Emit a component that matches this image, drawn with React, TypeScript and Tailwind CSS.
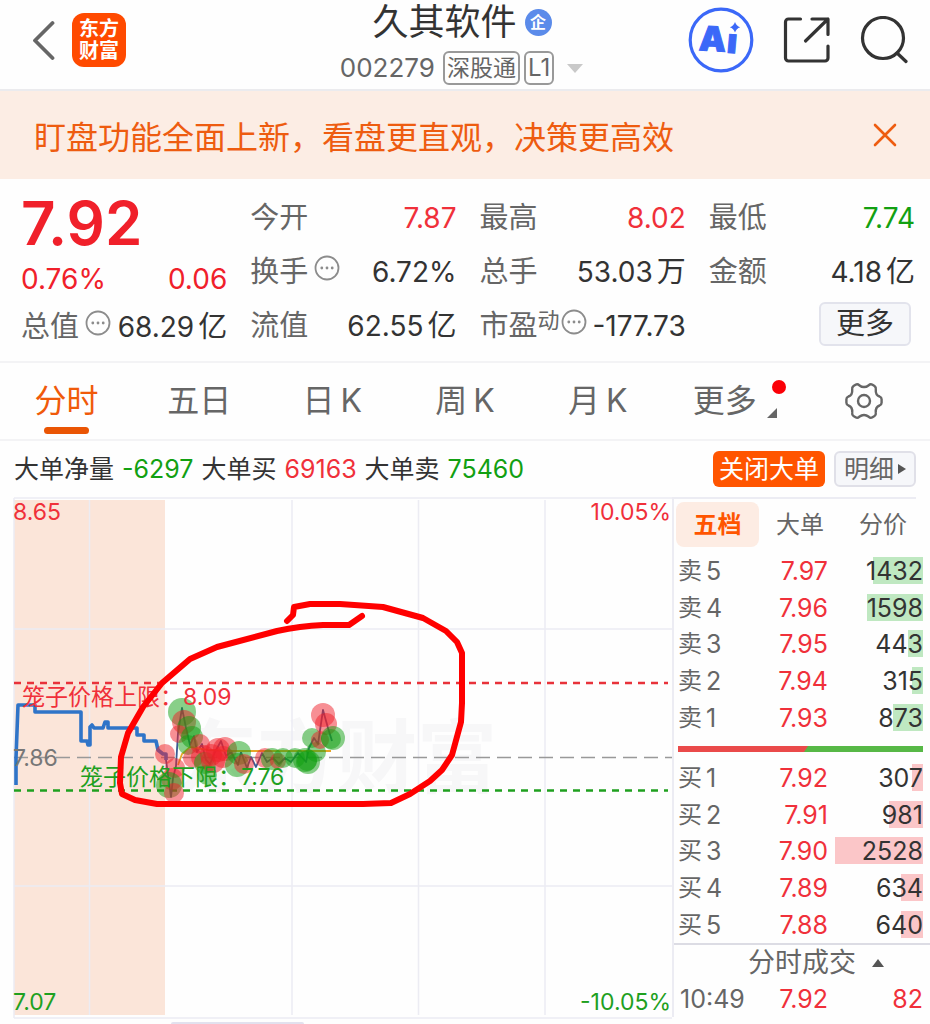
import React from "react";

type Level = { name: string; price: string; volume: number };

const asks: Level[] = [
  { name: "卖5", price: "7.97", volume: 1432 },
  { name: "卖4", price: "7.96", volume: 1598 },
  { name: "卖3", price: "7.95", volume: 443 },
  { name: "卖2", price: "7.94", volume: 315 },
  { name: "卖1", price: "7.93", volume: 873 },
];

const bids: Level[] = [
  { name: "买1", price: "7.92", volume: 307 },
  { name: "买2", price: "7.91", volume: 981 },
  { name: "买3", price: "7.90", volume: 2528 },
  { name: "买4", price: "7.89", volume: 634 },
  { name: "买5", price: "7.88", volume: 640 },
];

const MAX_VOLUME = 2528;
const RED = "#f0202a";
const GREEN = "#12a012";

// [x, y, radius, colour] of every large-order bubble
const bubbles: [number, number, number, string][] = [
  [165, 754, 10, RED],
  [175, 768, 10, RED],
  [172, 779, 11, RED],
  [169, 785, 13, GREEN],
  [174, 793, 10, RED],
  [182, 712, 14, GREEN],
  [184, 722, 12, RED],
  [189, 728, 12, GREEN],
  [179, 734, 9, RED],
  [192, 737, 11, GREEN],
  [188, 745, 10, GREEN],
  [200, 744, 10, RED],
  [193, 758, 10, RED],
  [203, 757, 12, RED],
  [205, 763, 11, GREEN],
  [207, 775, 10, GREEN],
  [213, 761, 12, RED],
  [218, 750, 12, RED],
  [225, 749, 12, RED],
  [211, 755, 11, RED],
  [223, 757, 11, RED],
  [239, 753, 12, GREEN],
  [237, 765, 12, GREEN],
  [244, 764, 10, RED],
  [265, 758, 10, RED],
  [272, 759, 11, GREEN],
  [278, 761, 8, RED],
  [283, 758, 10, GREEN],
  [295, 758, 10, GREEN],
  [305, 760, 12, GREEN],
  [308, 762, 12, GREEN],
  [307, 761, 10, GREEN],
  [316, 752, 10, GREEN],
  [312, 738, 10, GREEN],
  [320, 740, 9, RED],
  [323, 715, 12, RED],
  [326, 724, 11, RED],
  [333, 738, 12, GREEN],
  [331, 739, 10, GREEN],
];

function Dots() {
  return (
    <svg className="size-[26px] shrink-0 text-[#8c8c8c]" viewBox="0 0 26 26" fill="none" aria-hidden="true">
      <circle cx="13" cy="13" r="11.5" stroke="currentColor" strokeWidth="1.8" />
      <g fill="currentColor">
        <circle cx="7.8" cy="13" r="1.4" />
        <circle cx="13" cy="13" r="1.4" />
        <circle cx="18.2" cy="13" r="1.4" />
      </g>
    </svg>
  );
}

function Stat({
  label,
  value,
  unit,
  color = "text-[#333]",
  children,
}: {
  label: string;
  value: string;
  unit?: string;
  color?: string;
  children?: React.ReactNode;
}) {
  return (
    <div className="flex h-[54px] items-center justify-between whitespace-nowrap">
      <dt className="flex items-center text-[29px] leading-8 text-[#666]">
        {label}
        {children}
      </dt>
      <dd className={`flex items-center gap-1 text-[28px] leading-8 ${color}`}>
        {value}
        {unit && <span className="text-[29px]">{unit}</span>}
      </dd>
    </div>
  );
}

function Header() {
  return (
    <header className="grid h-[91px] grid-cols-[1fr_auto_1fr] items-start border-b-2 border-[#ebebee] pr-[22px] pl-4">
      <div className="flex items-center gap-4 pt-[13px] pl-4">
        <button aria-label="返回" className="text-[#666]">
          <svg className="h-10 w-6" viewBox="0 0 24 40" fill="none" stroke="currentColor" strokeWidth="3.8" strokeLinecap="round" strokeLinejoin="round">
            <path d="M20.5 3 3 20.5 20.5 38" />
          </svg>
        </button>
        <a href="#home" className="flex size-[54px] flex-col items-center justify-center rounded-xl bg-[#ff4a00] text-xl leading-[22px] font-bold text-white">
          <span>东方</span>
          <span>财富</span>
        </a>
      </div>
      <div className="flex flex-col items-center">
        <h1 className="flex h-11 items-center gap-2 text-4xl leading-[44px] text-[#333]">
          久其软件
          <span className="flex size-[27px] items-center justify-center rounded-full bg-[#5b8bea] text-base leading-4 font-bold text-white">企</span>
        </h1>
        <div className="flex h-12 items-center gap-1 text-[#666]">
          <span className="pr-1 text-[26px] leading-8">002279</span>
          <span className="rounded-md border-2 border-[#999] px-[2px] text-[23px] leading-[30px]">深股通</span>
          <span className="rounded-md border-2 border-[#999] px-[2px] text-2xl leading-[30px]">L1</span>
          <button aria-label="切换股票" className="pl-2">
            <svg className="h-[9px] w-[18px]" viewBox="0 0 18 9" aria-hidden="true">
              <path d="M1 0h16L9 9z" fill="#c9c9c9" />
            </svg>
          </button>
        </div>
      </div>
      <div className="flex items-center justify-end gap-[29px] pt-[7px] text-[#333]">
        <button aria-label="Ai">
          <svg className="size-[66px]" viewBox="0 0 66 66" fill="none">
            <circle cx="33" cy="33" r="30.800" stroke="#3b68f8" strokeWidth="3.200" />
            <g fill="#3b68f8" className="font-['Inter',sans-serif] text-[34px] font-black">
              <text x="11" y="44" transform="rotate(3 24 33)" stroke="#3b68f8" strokeWidth="1">A</text>
              <text x="39" y="46" transform="rotate(5 44 36)" stroke="#3b68f8" strokeWidth="1">ı</text>
              <path d="M47 15q1.300 4 5.200 5.300-3.900 1.300-5.200 5.300-1.300-4-5.200-5.300 3.900-1.300 5.200-5.300z" />
            </g>
          </svg>
        </button>
        <button aria-label="分享">
          <svg className="size-[48px]" viewBox="0 0 48 48" fill="none" stroke="currentColor" strokeWidth="3.200" strokeLinecap="round" strokeLinejoin="round">
            <path d="M17.500 3H5.500a3 3 0 0 0-3 3v36a3 3 0 0 0 3 3h36.500a3 3 0 0 0 3-3V30" />
            <path d="M29 3h16v15.500M45 3 22.500 25" />
          </svg>
        </button>
        <button aria-label="搜索">
          <svg className="size-[48px]" viewBox="0 0 48 48" fill="none" stroke="currentColor" strokeWidth="3.200" strokeLinecap="round">
            <circle cx="23" cy="22" r="20.500" />
            <path d="M37 37l9 8.500" />
          </svg>
        </button>
      </div>
    </header>
  );
}

function Quote() {
  return (
    <dl className="grid grid-cols-4 gap-x-[23px] border-b-2 border-[#f3f3f5] pt-3 pr-[15px] pb-2 pl-[21px]">
      <div className="text-[#f0202a]">
        <div className="flex h-16 items-center text-[60px] leading-[60px] font-semibold">7.92</div>
        <div className="flex h-12 items-center justify-between text-[28px] leading-8">
          <span>0.76%</span>
          <span>0.06</span>
        </div>
        <div className="flex h-[48px] items-center justify-between whitespace-nowrap text-[#333]">
          <dt className="flex items-center text-[29px] leading-8 text-[#666]">
            总值
            <span className="pb-2 pl-[6px]"><Dots /></span>
          </dt>
          <dd className="flex items-center gap-1 text-[28px] leading-8">
            68.29<span className="text-[29px]">亿</span>
          </dd>
        </div>
      </div>
      <div>
        <Stat label="今开" value="7.87" color="text-[#f0303a]" />
        <Stat label="换手" value="6.72%">
          <span className="pb-2 pl-[6px]"><Dots /></span>
        </Stat>
        <Stat label="流值" value="62.55" unit="亿" />
      </div>
      <div>
        <Stat label="最高" value="8.02" color="text-[#f0303a]" />
        <Stat label="总手" value="53.03" unit="万" />
        <Stat label="市盈" value="-177.73">
          <span className="flex items-center gap-px pb-2">
            <span className="pb-1 text-[22px] leading-6">动</span>
            <Dots />
          </span>
        </Stat>
      </div>
      <div>
        <Stat label="最低" value="7.74" color="text-[#12a012]" />
        <Stat label="金额" value="4.18" unit="亿" />
        <div className="flex h-[50px] items-center justify-end pr-1">
          <button className="h-11 w-[92px] rounded-md border-2 border-[#e2e3ec] bg-[#f6f7fa] text-[29px] leading-9 text-[#333]">更多</button>
        </div>
      </div>
    </dl>
  );
}

function Tabs() {
  return (
    <nav className="grid h-[78px] grid-cols-7 border-b-2 border-[#f3f3f5] text-[32px] leading-10 text-[#666]">
      <button className="flex flex-col items-center pt-[18px] text-[#f05a0a]">
        分时
        <span className="mt-[6px] h-[7px] w-[45px] rounded-full bg-[#ea5504]" />
      </button>
      <button className="flex justify-center pt-[18px]">五日</button>
      {["日", "周", "月"].map((unit) => (
        <button key={unit} className="flex justify-center gap-[6px] pt-[18px]">
          <span>{unit}</span>
          <span>K</span>
        </button>
      ))}
      <button className="relative flex justify-center gap-[10px] pt-[18px] pl-2">
        更多
        <svg className="mt-[27px] size-[10px]" viewBox="0 0 10 10" aria-hidden="true">
          <path d="M10 0v10H0z" fill="#666" />
        </svg>
        <span className="absolute top-[17px] right-[11px] size-[14px] rounded-full bg-[#fb0007]" />
      </button>
      <button aria-label="设置" className="flex justify-center pt-[19px]">
        <svg className="size-[38px]" viewBox="0 0 38 38" fill="none" stroke="currentColor" strokeWidth="2.400" strokeLinejoin="round">
          <path d="M10.500 2.800Q12.500 1.600 14.200 3.200Q19 7 23.800 3.200Q25.500 1.600 27.500 2.800L29.500 4Q31.200 5.200 30.800 7.300Q30.300 13 34.600 14.500Q36.600 15.300 36.600 17.200V20.800Q36.600 22.700 34.600 23.500Q30.300 25 30.800 30.700Q31.200 32.800 29.500 34L27.500 35.200Q25.500 36.400 23.800 34.800Q19 31 14.200 34.800Q12.500 36.400 10.500 35.200L8.500 34Q6.800 32.800 7.200 30.700Q7.700 25 3.400 23.500Q1.400 22.700 1.400 20.800V17.200Q1.400 15.300 3.400 14.500Q7.700 13 7.200 7.300Q6.800 5.200 8.500 4Z" />
          <circle cx="19" cy="19" r="6" />
        </svg>
      </button>
    </nav>
  );
}

function BigOrders() {
  return (
    <section className="flex h-14 items-center justify-between pr-[14px] pl-[14px] whitespace-nowrap">
      <p className="flex items-center gap-2 text-[25px] leading-8 text-[#333]">
        大单净量 <span className="text-[#12a012]">-6297</span>
        大单买 <span className="text-[#f0303a]">69163</span>
        大单卖 <span className="text-[#12a012]">75460</span>
      </p>
      <div className="flex gap-[9px]">
        <button className="h-9 rounded-md bg-[#ff5500] px-[6px] text-[25px] leading-9 text-white">关闭大单</button>
        <button className="flex h-9 items-center gap-1 rounded-md border-2 border-[#e0e0e8] bg-[#f6f7fa] px-2 text-[25px] leading-8 text-[#666]">
          明细
          <svg className="h-[10px] w-2" viewBox="0 0 8 10" aria-hidden="true">
            <path d="M0 0l8 5-8 5z" fill="#555" />
          </svg>
        </button>
      </div>
    </section>
  );
}

function Chart() {
  return (
    <svg
      className="block h-auto w-full font-['Inter','Noto_Sans_CJK_SC',sans-serif] text-[23px]"
      viewBox="0 497 672 527"
      fill="none"
      role="img"
      aria-label="分时走势图"
    >
      <rect x="14" y="500" width="151" height="515" fill="#fbe5d9" />
      <g fill="#f7f7f8" className="text-[80px] font-bold">
        <text x="177" y="786">东方财富</text>
      </g>
      <g stroke="#ececf3" strokeWidth="1.500">
        <path d="M14 498H672M14 629H672M14 886H672M14 1018H672" />
        <path d="M14 498V1018M89.500 500V1015M292 500V1015M418.500 500V1015M545 500V1015" />
      </g>
      <rect x="171" y="1022" width="133" height="6" rx="2" fill="#e2e1ee" />
      <path d="M14 757.500H672" stroke="#999" strokeWidth="1.600" strokeDasharray="14 7" />
      <path d="M14 683H668" stroke="#e8323a" strokeWidth="2.600" strokeDasharray="7 6" />
      <path d="M14 790.500H668" stroke="#1fa01f" strokeWidth="2.600" strokeDasharray="7 6" />
      <path
        d="M16 785V758L18 705H35V712H81V741H87L88 745H90V727L92 725 94 728H103L105 722H108V728H137V735H144V741H156L158 750 163 754H166V760"
        stroke="#2f74c8"
        strokeWidth="3.600"
        strokeLinejoin="round"
      />
      <path d="M166 760 171 797 173 778 176 766 178 733 182 708 186 728 190 745 194 736 197 752 202 744 206 760 210 764 215 752 221 741 226 756 231 752 238 765 241 752 247 768 251 757 256 767 262 753 267 762 273 758 279 764 285 758 291 762 298 753 306 762 309 748 314 738 318 744 323 710 328 728 332 741" stroke="#3c5a92" strokeWidth="1.800" strokeLinejoin="round" />
      <path d="M178 765 182 754 190 747 208 750 232 751H331" stroke="#e6a72a" strokeWidth="1.800" />
      {bubbles.map(([cx, cy, r, fill], i) => (
        <circle key={i} cx={cx} cy={cy} r={r} fill={fill} fillOpacity="0.5" />
      ))}
      <g fill="#f0303a">
        <text x="13" y="520">8.65</text>
        <text x="671" y="520" textAnchor="end">10.05%</text>
        <text x="22" y="705">笼子价格上限：8.09</text>
      </g>
      <text x="13" y="766" fill="#777">7.86</text>
      <g fill="#1fa01f">
        <text x="80" y="785">笼子价格下限：7.76</text>
        <text x="13" y="1010">7.07</text>
        <text x="671" y="1010" textAnchor="end">-10.05%</text>
      </g>
      <path
        d="M287 621 293 615 294 607 310 604H340L383 607 423 618 446 631 457 642 462 653V703L461 722 452 755 442 770 430 781 410 794 391 803 363 804H190L157 804 135 800 122 794 120 783 121 757 128 733 143 707 162 683 190 659 217 647 277 631Q300 626 323 625H349L362 616"
        stroke="#ff0000"
        strokeWidth="6"
        strokeLinecap="round"
        strokeLinejoin="round"
      />
    </svg>
  );
}

function Book({ rows, bar, label }: { rows: Level[]; bar: string; label: string }) {
  return (
    <table aria-label={label} className="h-[183px] w-full table-fixed text-[25px] leading-7">
      <tbody>
        {rows.map((row) => (
          <tr key={row.name}>
            <th scope="row" className="w-[66px] p-0 text-left font-normal text-[#666]">
              <span className="flex gap-1">
                <span className="text-2xl leading-7">{row.name[0]}</span>
                <span>{row.name[1]}</span>
              </span>
            </th>
            <td className="w-[84px] p-0 text-right text-[#f0303a]">{row.price}</td>
            <td className="p-0 text-right text-[#333]">
              <div className="relative">
                <span className={`absolute top-0 right-0 h-[27px] ${bar}`} style={{ width: Math.round((row.volume / MAX_VOLUME) * 88) }} />
                <span className="relative">{row.volume}</span>
              </div>
            </td>
          </tr>
        ))}
      </tbody>
    </table>
  );
}

function Side() {
  return (
    <aside className="w-[258px] shrink-0 border-l-2 border-[#ececf3]">
      <div className="mr-[14px] border-t-2 border-[#ececf3]" />
      <div className="flex items-center gap-px pt-[3px] pl-[2px] text-2xl leading-[44px] text-[#666]">
        <button className="h-[45px] w-[83px] rounded-lg bg-[#fdece3] font-bold text-[#ff5500]">五档</button>
        <button className="h-[45px] w-[80px]">大单</button>
        <button className="h-[45px] w-[84px]">分价</button>
      </div>
      <div className="pt-[6px] pr-[7px] pl-1">
        <Book rows={asks} bar="bg-[#bfe8c1]" label="卖盘" />
        <svg className="mt-[10px] mb-2 block h-[6px] w-full" viewBox="0 0 245 6" preserveAspectRatio="none" aria-hidden="true">
          <path d="M0 0h245v6H0z" fill="#57b846" />
          <path d="M0 0h130l-4 6H0z" fill="#ea4a4a" />
        </svg>
        <Book rows={bids} bar="bg-[#fbc6c8]" label="买盘" />
      </div>
      <button className="flex h-[38px] w-full items-center justify-center gap-4 border-t-2 border-[#dcdce4] pl-7 text-[27px] leading-9 text-[#666]">
        分时成交
        <svg className="h-2 w-3" viewBox="0 0 12 8" aria-hidden="true">
          <path d="M6 0l6 8H0z" fill="#555" />
        </svg>
      </button>
      <table aria-label="分时成交" className="h-9 w-full table-fixed text-[25px] leading-7">
        <tbody>
          <tr>
            <td className="w-[70px] p-0 pl-[6px] whitespace-nowrap text-[#666]">10:49</td>
            <td className="w-[84px] p-0 text-right text-[#f0303a]">7.92</td>
            <td className="p-0 pr-[7px] text-right text-[#f0303a]">82</td>
          </tr>
        </tbody>
      </table>
    </aside>
  );
}

export default function App() {
  return (
    <div className="w-full overflow-hidden bg-[#fefefe] font-['Inter','Noto_Sans_CJK_SC',sans-serif]">
      <Header />
      <div className="flex h-[88px] items-center justify-between bg-[#fcede4] pr-[33px] pl-[34px] text-[#ee5c10]">
        <p className="pt-[5px] text-[32px] leading-10">盯盘功能全面上新，看盘更直观，决策更高效</p>
        <button aria-label="关闭">
          <svg className="size-6" viewBox="0 0 24 24" fill="none" stroke="currentColor" strokeWidth="2.600" strokeLinecap="round">
            <path d="M2 2l20 20M22 2 2 22" />
          </svg>
        </button>
      </div>
      <Quote />
      <Tabs />
      <BigOrders />
      <main className="flex items-start">
        <div className="min-w-0 flex-1">
          <Chart />
        </div>
        <Side />
      </main>
    </div>
  );
}
